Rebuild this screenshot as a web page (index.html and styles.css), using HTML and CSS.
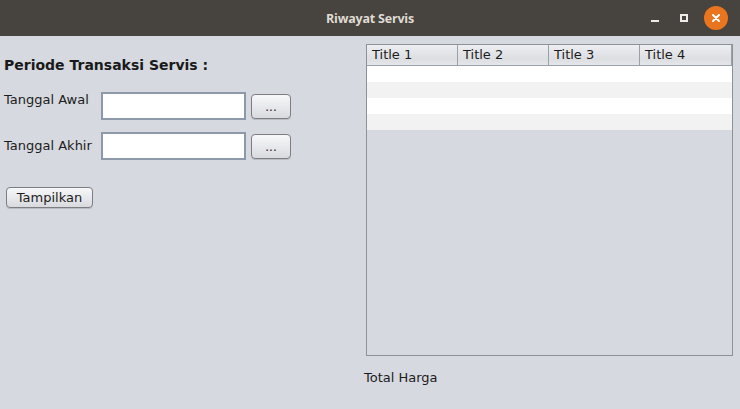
FILE: index.html
```html
<!DOCTYPE html>
<html>
<head>
<meta charset="utf-8">
<link rel="stylesheet" href="styles.css">
</head>
<body>
<div class="window">
  <div class="titlebar">
    <div class="title">Riwayat Servis</div>
    <div class="controls">
      <span class="ctl min"></span>
      <span class="ctl max"></span>
      <span class="ctl close">
        <svg width="10" height="10" viewBox="0 0 10 10"><path d="M2 2L8 8M8 2L2 8" stroke="#fff" stroke-width="2" stroke-linecap="round"/></svg>
      </span>
    </div>
  </div>
  <div class="content">
    <div class="left">
      <h1 class="heading">Periode Transaksi Servis :</h1>
      <div class="row">
        <span class="label">Tanggal Awal</span>
        <input class="field" type="text">
        <button class="btn dots">...</button>
      </div>
      <div class="row">
        <span class="label">Tanggal Akhir</span>
        <input class="field" type="text">
        <button class="btn dots">...</button>
      </div>
      <button class="btn show">Tampilkan</button>
    </div>
    <div class="right">
      <div class="table">
        <div class="thead">
          <div class="th">Title 1</div>
          <div class="th">Title 2</div>
          <div class="th">Title 3</div>
          <div class="th last">Title 4</div>
        </div>
        <div class="tr"></div>
        <div class="tr alt"></div>
        <div class="tr"></div>
        <div class="tr alt"></div>
      </div>
      <div class="total">Total Harga</div>
    </div>
  </div>
</div>
</body>
</html>
```
FILE: styles.css
```css
* { box-sizing: border-box; }
html, body { margin: 0; padding: 0; }
body {
  width: 740px; height: 409px; overflow: hidden;
  background: #d6d9df;
  font-family: "DejaVu Sans", sans-serif;
  color: #1c1c1c;
}
.window { width: 740px; height: 409px; display: flex; flex-direction: column; }
.titlebar {
  height: 36px; background: #47433f; position: relative;
  display: flex; align-items: center; justify-content: center;
}
.title {
  color: #dfdbd2; font-family: "Open Sans", "DejaVu Sans", sans-serif;
  font-weight: bold; font-size: 12.5px; letter-spacing: -0.2px;
}
.controls {
  position: absolute; right: 12px; top: 6px; height: 24px;
  display: flex; align-items: center;
}
.ctl { display: block; }
.min { width: 8px; height: 2px; background: #ecebe7; margin-top: 6px; margin-right: 21px; }
.max { width: 8px; height: 8px; border: 2px solid #ecebe7; margin-right: 16px; }
.close {
  width: 24px; height: 24px; border-radius: 50%; background: #e9751f;
  display: flex; align-items: center; justify-content: center;
}
.close svg { display: block; }
.content { flex: 1; display: flex; }
.left { width: 362px; padding: 16px 0 0 4px; display: flex; flex-direction: column; align-items: flex-start; }
.heading {
  margin: 0; font-size: 14px; font-weight: bold; line-height: 18px;
  margin-top: 4px; color: #1a1a1a;
}
.row { display: flex; align-items: flex-start; }
.heading + .row { margin-top: 18px; }
.row + .row { margin-top: 12px; }
.label { width: 97px; font-size: 13px; line-height: 16px; }
.row + .row .label { padding-top: 6px; }
.field {
  width: 145px; height: 28px; margin: 0; background: #fff;
  border: 2px solid #8d98a8; outline: none; padding: 0;
}
.btn {
  font-family: "DejaVu Sans", sans-serif; font-size: 13px; color: #1c1c1c;
  border: 1px solid #7c7e82; border-radius: 4px; padding: 0;
  background: linear-gradient(#f6f7f8, #e4e6e9 60%, #d8dade);
  box-shadow: 0 1px 0 #b9bcc2;
}
.dots {
  width: 40px; height: 25px; margin: 2px 0 0 5px; color: #3a1028;
  font-size: 12px; line-height: 22px;
}
.show { width: 87px; height: 21px; margin: 27px 0 0 2px; line-height: 18px; }
.right { width: 378px; padding: 8px 0 0 4px; display: flex; flex-direction: column; }
.table {
  width: 367px; height: 312px; border: 1px solid #8e9196;
  background: #d6d9df;
}
.thead {
  display: flex; height: 21px;
  background: linear-gradient(#eceef1, #dcdee2 70%, #e4e6e9);
  border-bottom: 1px solid #9aa0a8;
}
.th {
  width: 91px; font-size: 13px; line-height: 19px; padding-left: 5px;
  border-right: 1px solid #9aa0a8; color: #1c1c1c;
}
.th.last { flex: 1; }
.tr { height: 16px; background: #fff; }
.tr.alt { background: #f2f2f2; }
.total { font-size: 13px; margin-top: 14px; margin-left: -2px; line-height: 16px; }
```
